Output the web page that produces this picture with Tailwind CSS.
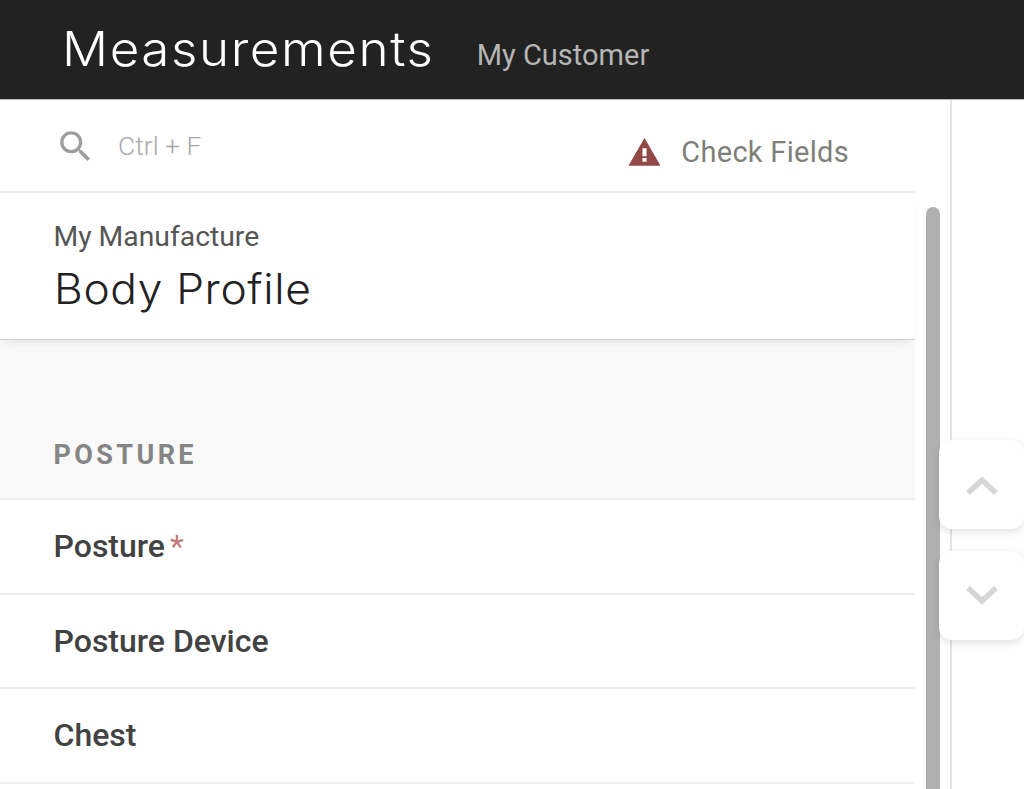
<!DOCTYPE html>
<html lang="en">
<head>
    <meta charset="UTF-8">
    <title>Measurements</title>
    <script src="https://cdn.jsdelivr.net/npm/@tailwindcss/browser@4"></script>
</head>
<body class="bg-white font-['Roboto',sans-serif] h-[789px] overflow-hidden relative">
    <header class="h-[100px] bg-[#222222] border-b border-[#bdbdbd] flex items-center pl-[62px]">
        <h1 class="font-['Inter',sans-serif] font-light text-[48px] leading-none text-white mr-[65px] tracking-[1.5px] -mt-[2px] scale-x-[1.065] origin-left">Measurements</h1>
        <span class="text-[29px] text-[#b5b5b5] mt-[13px]">My Customer</span>
    </header>

    <div class="flex h-[689px]">
        <main class="w-[915px] shrink-0">
            <div class="h-[93px] border-b-2 border-[#eeeeee] flex items-start justify-between">
                <div class="flex items-center pl-[55px] pt-[26px]">
                    <svg class="w-[41px] h-[41px]" viewBox="0 0 24 24" fill="#9e9e9e"><path d="M15.5 14h-.79l-.28-.27A6.47 6.47 0 0 0 16 9.5 6.5 6.5 0 1 0 9.5 16c1.61 0 3.09-.59 4.23-1.57l.27.28v.79l5 4.99L20.49 19l-4.99-5zm-6 0C7.01 14 5 11.99 5 9.5S7.01 5 9.5 5 14 7.01 14 9.5 11.99 14 9.5 14z"/></svg>
                    <span class="text-[26.5px] font-light text-[#a8a8a8] ml-[22px] -mt-[2px]">Ctrl + F</span>
                </div>
                <div class="flex items-center pr-[66px] pt-[31px]">
                    <svg class="w-[35px] h-[35px]" viewBox="0 0 24 24"><path fill="#934848" d="M1 21h22L12 2 1 21z"/><path fill="#ffffff" d="M10.6 9h2.8v5.6h-2.8zM10.6 15.8h2.8v2.6h-2.8z"/></svg>
                    <span class="text-[29px] text-[#7f7f7a] ml-[19px] tracking-[0.3px]">Check Fields</span>
                </div>
            </div>

            <div class="h-[147px] bg-white pl-[53.5px] pt-[27px] border-b border-[#d0d0d0] shadow-[0_6px_10px_-6px_rgba(0,0,0,0.14)] relative">
                <div class="text-[28.3px] leading-[34px] text-[#555555]">My Manufacture</div>
                <div class="font-['Inter',sans-serif] font-light text-[42px] leading-[50px] text-[#222222] mt-[10px] tracking-[0.6px] scale-x-[1.055] origin-left">Body Profile</div>
            </div>

            <div class="h-[160px] bg-[#f9f9f9] border-b-2 border-[#eeeeee] pl-[53.5px] pt-[97px]">
                <div class="text-[27px] leading-[36px] font-bold tracking-[3.4px] text-[#858585]">POSTURE</div>
            </div>

            <div class="h-[95px] border-b-2 border-[#eeeeee] pl-[53.5px] pb-[2px] flex items-center">
                <span class="text-[32px] font-medium text-[#424242]">Posture</span>
                <span class="text-[32px] text-[#c47a7a] ml-[5px]">*</span>
            </div>
            <div class="h-[94px] border-b-2 border-[#eeeeee] pl-[53.5px] pb-[1px] flex items-center">
                <span class="text-[32px] font-medium text-[#424242]">Posture Device</span>
            </div>
            <div class="h-[95px] border-b-2 border-[#eeeeee] pl-[53.5px] pb-[1px] flex items-center">
                <span class="text-[32px] font-medium text-[#424242]">Chest</span>
            </div>
        </main>

        <div class="w-[37px] shrink-0 border-r-2 border-[#e4e4e4] pl-[11px] pt-[107px]">
            <div class="w-[14px] h-[600px] bg-[#b0b0b0] rounded-t-[7px]"></div>
        </div>
    </div>

    <button class="absolute left-[939px] top-[440px] w-[85px] h-[89px] bg-white rounded-[13px] shadow-[0_3px_8px_rgba(0,0,0,0.12)] flex items-center justify-center">
        <svg class="w-[32px] h-[24px]" viewBox="0 0 32 24" fill="none" stroke="#d6d6d6" stroke-width="5.5"><path d="M2 20 L16 7 L30 20"/></svg>
    </button>
    <button class="absolute left-[939px] top-[551px] w-[85px] h-[89px] bg-white rounded-[13px] shadow-[0_3px_8px_rgba(0,0,0,0.12)] flex items-center justify-center">
        <svg class="w-[32px] h-[24px]" viewBox="0 0 32 24" fill="none" stroke="#d6d6d6" stroke-width="5.5"><path d="M2 4 L16 17 L30 4"/></svg>
    </button>
</body>
</html>
